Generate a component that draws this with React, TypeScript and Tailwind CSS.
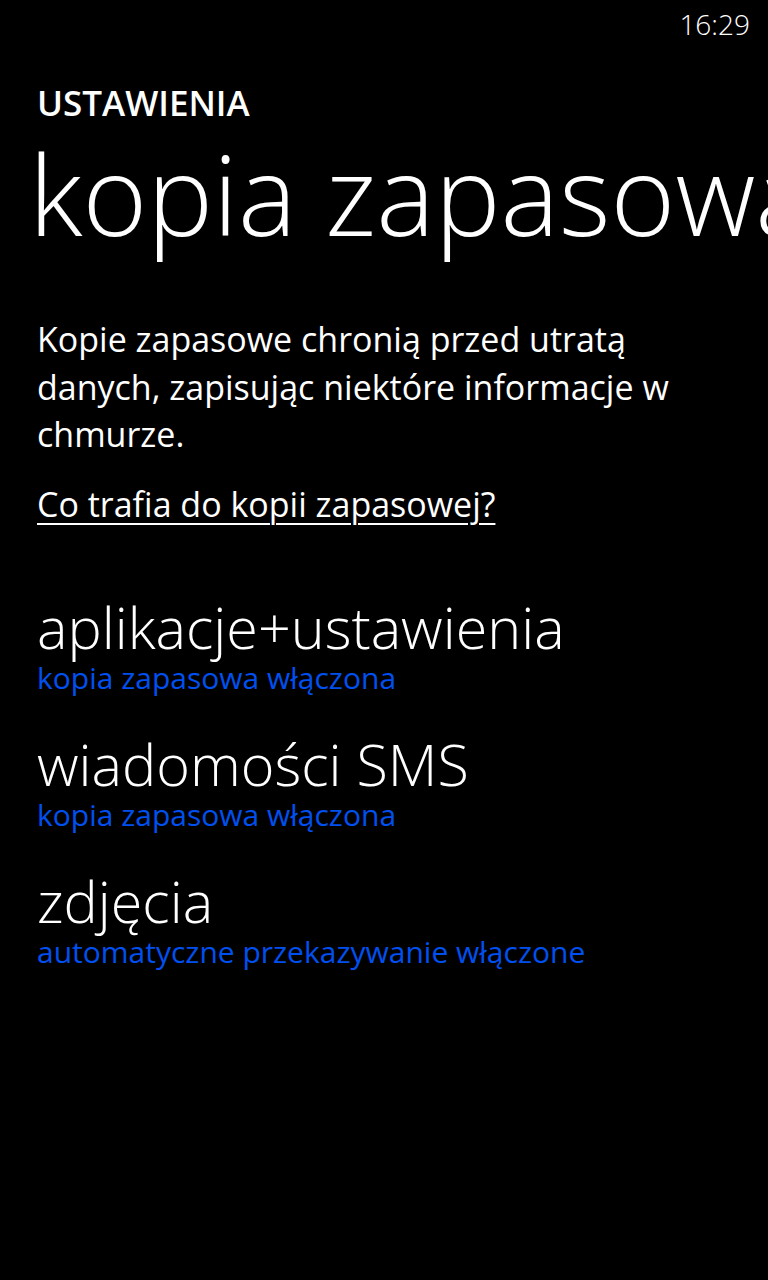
import React from "react";

const font = { fontFamily: '"Open Sans", "Noto Sans", sans-serif' };

function Item({ title, sub }: { title: string; sub: string }) {
  return (
    <div className="flex flex-col">
      <div className="text-[57.5px] font-light leading-[66px] text-white whitespace-nowrap">{title}</div>
      <div className="text-[30px] leading-[36px] text-[#0050ef] whitespace-nowrap">{sub}</div>
    </div>
  );
}

export default function App() {
  return (
    <div className="w-[768px] h-[1280px] bg-black overflow-hidden text-white" style={font}>
      <div className="h-[48px] flex justify-end items-center pr-[18px]">
        <span className="text-[28px] font-light leading-[48px]">16:29</span>
      </div>
      <div className="pl-[37px] pt-[35px] text-[35px] font-semibold leading-[40px]">USTAWIENIA</div>
      <div className="pl-[29px] pt-[1px] text-[110.5px] font-light leading-[139px] whitespace-nowrap">kopia zapasowa</div>
      <div className="pl-[37px] pr-[40px] pt-[53px] text-[34px] leading-[47.5px]">
        Kopie zapasowe chronią przed utratą danych, zapisując niektóre informacje w chmurze.
      </div>
      <div className="pl-[37px] pt-[22px] text-[34px] leading-[47.5px]">
        <span className="underline underline-offset-[6px] decoration-[2px]">Co trafia do kopii zapasowej?</span>
      </div>
      <div className="pl-[37px] pt-[66px] flex flex-col gap-[35px]">
        <Item title="aplikacje+ustawienia" sub="kopia zapasowa włączona" />
        <Item title="wiadomości SMS" sub="kopia zapasowa włączona" />
        <Item title="zdjęcia" sub="automatyczne przekazywanie włączone" />
      </div>
    </div>
  );
}
